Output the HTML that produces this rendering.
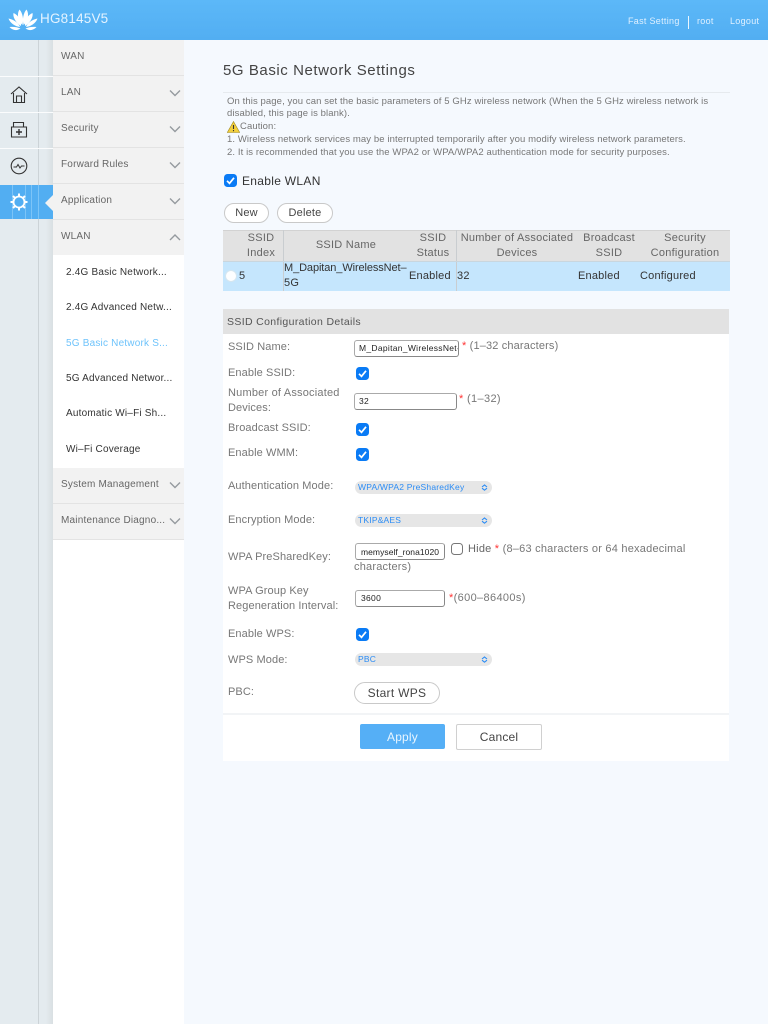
<!DOCTYPE html>
<html><head><meta charset="utf-8"><title>5G Basic Network Settings</title>
<style>
*{box-sizing:border-box}
html,body{margin:0;padding:0}
body{width:768px;height:1024px;overflow:hidden;background:#f5f9fe;position:relative;font-family:"Liberation Sans",sans-serif;color:#666}
.a{position:absolute}
.t{position:absolute;white-space:nowrap;line-height:14px;font-size:10px;letter-spacing:.45px}
.m{color:#666;left:61px;font-size:10px;letter-spacing:.2px}
.s{color:#333;left:66px;font-size:10px;letter-spacing:.2px}
.l{color:#777;left:228px;font-size:11px;letter-spacing:.1px}
.h{color:#666;font-size:11px;letter-spacing:.25px;text-align:center}
.d{color:#333;font-size:11px;letter-spacing:.2px}
.n{font-size:9.5px;letter-spacing:.1px;left:227px;color:#777}
.ck{position:absolute;width:13px;height:13px;border-radius:3.5px;background:#0a7bf5}
.in{position:absolute;background:#fff;border:1px solid #888;border-top-color:#aaa;border-left-color:#aaa;border-radius:3px;font-size:8.5px;letter-spacing:.3px;color:#222;line-height:15px;padding-left:4px;white-space:nowrap;overflow:hidden;height:17px}
.se{position:absolute;left:355px;width:137px;height:13px;border-radius:7px;background:#e6e6e6;color:#2b8cf5;font-size:8.5px;letter-spacing:.2px;line-height:13px;padding-left:3px;white-space:nowrap}
.se svg{position:absolute;left:126px;top:3px}
.b{position:absolute;background:#fff;border:1px solid #c9c9c9;border-radius:10px;text-align:center;color:#444}
.r{color:#f33;font-size:11px}
</style></head><body>
<div class="a" style="left:0;top:0;width:768px;height:40px;background:linear-gradient(#5cb8f8,#52aef2)"></div>
<svg class="a" style="left:8px;top:9px" width="30" height="23" viewBox="0 0 30 23" fill="#fff"><path d="M14.4 16 C10 12 8.5 5 11.5 .5 C14.5 4 16 10 14.4 16Z"/><path d="M15.6 16 C20 12 21.5 5 18.5 .5 C15.5 4 14 10 15.6 16Z"/><path d="M13 17 C8 14 4.5 8 5.5 4 C10 6 13.5 11 13 17Z"/><path d="M17 17 C22 14 25.5 8 24.5 4 C20 6 16.5 11 17 17Z"/><path d="M12 18 C7 17.5 2 14 .5 9.5 C5.5 10.5 10.5 13.5 12 18Z"/><path d="M18 18 C23 17.5 28 14 29.5 9.5 C24.5 10.5 19.5 13.5 18 18Z"/><path d="M12.5 19.5 C9 22 4.5 21.5 1.5 18 C5.5 17.5 9.5 18 12.5 19.5Z"/><path d="M17.5 19.5 C21 22 25.5 21.5 28.5 18 C24.5 17.5 20.5 18 17.5 19.5Z"/></svg>
<div class="t" style="left:40px;top:12px;color:#e4f3ff;font-size:13.5px;letter-spacing:.2px">HG8145V5</div>
<div class="t" style="left:628px;top:14px;color:#dff0ff;font-size:9px;letter-spacing:.3px">Fast Setting</div>
<div class="a" style="left:688px;top:16px;width:1px;height:13px;background:#eaf6ff"></div>
<div class="t" style="left:697px;top:14px;color:#dff0ff;font-size:9px;letter-spacing:.3px">root</div>
<div class="t" style="left:730px;top:14px;color:#dff0ff;font-size:9px;letter-spacing:.3px">Logout</div>

<!-- left strip -->
<div class="a" style="left:0;top:40px;width:53px;height:984px;background:#e4ebef"></div>
<div class="a" style="left:38px;top:40px;width:1px;height:984px;background:#ccd3d7"></div>
<div class="a" style="left:46px;top:40px;width:7px;height:984px;background:linear-gradient(90deg,#e4ebef,#d9dfe2)"></div>
<div class="a" style="left:0;top:75.5px;width:53px;height:1.5px;background:#fbfcfd"></div>
<div class="a" style="left:0;top:111.5px;width:53px;height:1.5px;background:#fbfcfd"></div>
<div class="a" style="left:0;top:147.5px;width:53px;height:1.5px;background:#fbfcfd"></div>
<div class="a" style="left:0;top:185px;width:53px;height:34px;background:#52aef2"></div>
<div class="a" style="left:12px;top:185px;width:1px;height:34px;background:#7cc4f7"></div>
<div class="a" style="left:25px;top:185px;width:1px;height:34px;background:#7cc4f7"></div>
<div class="a" style="left:31px;top:185px;width:1px;height:34px;background:#7cc4f7"></div>
<div class="a" style="left:38px;top:185px;width:1px;height:34px;background:#7cc4f7"></div>
<div class="a" style="left:45px;top:195px;width:0;height:0;border-top:8px solid transparent;border-bottom:8px solid transparent;border-right:8px solid #f2f2f2"></div>
<svg class="a" style="left:10px;top:85px" width="18" height="20" viewBox="0 0 18 20" fill="none" stroke="#333" stroke-width="1.1"><path d="M1 9 L9 2 L17 9"/><path d="M3.5 8 V17.5 H14.5 V8"/><path d="M6.5 17.5 V11 H11.5 V17.5"/></svg>
<svg class="a" style="left:10px;top:120px" width="18" height="19" viewBox="0 0 18 19" fill="none" stroke="#333" stroke-width="1.1"><path d="M1.5 7 H16.5 V17 H1.5Z"/><path d="M3.5 7 V2.5 H13.5 V7"/><path d="M9 9 V15 M6 12 H12" stroke-width="1.4"/></svg>
<svg class="a" style="left:10px;top:157px" width="18" height="18" viewBox="0 0 18 18" fill="none" stroke="#333" stroke-width="1.1"><circle cx="9" cy="9" r="7.8"/><path d="M3.5 10 H6.5 L8 7.5 L10 11 L11.5 9 H14.5" stroke-width="1"/></svg>
<svg class="a" style="left:9px;top:192px" width="20" height="20" viewBox="0 0 20 20" fill="none" stroke="#fff"><circle cx="10" cy="10" r="5.5" stroke-width="1.8"/><path d="M10 1.5 V4 M10 16 V18.5 M1.5 10 H4 M16 10 H18.5 M4 4 L5.8 5.8 M14.2 14.2 L16 16 M16 4 L14.2 5.8 M5.8 14.2 L4 16" stroke-width="2"/></svg>

<!-- menu -->
<div class="a" style="left:53px;top:40px;width:131px;height:984px;background:#fff"></div>
<div class="a" style="left:53px;top:40px;width:131px;height:215px;background:#f2f2f2"></div>
<div class="a" style="left:53px;top:468px;width:131px;height:72px;background:#f2f2f2"></div>
<div class="a" style="left:53px;top:75px;width:131px;height:1px;background:#e3e3e3"></div>
<div class="a" style="left:53px;top:111px;width:131px;height:1px;background:#e3e3e3"></div>
<div class="a" style="left:53px;top:147px;width:131px;height:1px;background:#e3e3e3"></div>
<div class="a" style="left:53px;top:183px;width:131px;height:1px;background:#e3e3e3"></div>
<div class="a" style="left:53px;top:219px;width:131px;height:1px;background:#e3e3e3"></div>
<div class="a" style="left:53px;top:503px;width:131px;height:1px;background:#e3e3e3"></div>
<div class="a" style="left:53px;top:539px;width:131px;height:1px;background:#e3e3e3"></div>
<div class="t m" style="top:50px">WAN</div>
<div class="t m" style="top:86px">LAN</div>
<div class="t m" style="top:122px">Security</div>
<div class="t m" style="top:158px">Forward Rules</div>
<div class="t m" style="top:194px">Application</div>
<div class="t m" style="top:230px">WLAN</div>
<div class="t s" style="top:266px">2.4G Basic Network...</div>
<div class="t s" style="top:301px">2.4G Advanced Netw...</div>
<div class="t s" style="top:337px;color:#6ec3fb">5G Basic Network S...</div>
<div class="t s" style="top:372px">5G Advanced Networ...</div>
<div class="t s" style="top:407px">Automatic Wi–Fi Sh...</div>
<div class="t s" style="top:443px">Wi–Fi Coverage</div>
<div class="t m" style="top:478px">System Management</div>
<div class="t m" style="top:514px">Maintenance Diagno...</div>
<svg class="a" style="left:0;top:0" width="184" height="540" fill="none" stroke="#959a9f" stroke-width="1.4"><path d="M170 90.5 L175 95.5 L180 90.5M170 126.5 L175 131.5 L180 126.5M170 162.5 L175 167.5 L180 162.5M170 198.5 L175 203.5 L180 198.5M170 240 L175 235 L180 240M170 482.5 L175 487.5 L180 482.5M170 518.5 L175 523.5 L180 518.5"/></svg>

<!-- title -->
<div class="t" style="left:223px;top:63px;font-size:15px;line-height:16px;color:#444;letter-spacing:.56px">5G Basic Network Settings</div>
<div class="a" style="left:223px;top:92px;width:507px;height:1px;background:#e6eaee"></div>
<div class="t n" style="top:95px">On this page, you can set the basic parameters of 5 GHz wireless network (When the 5 GHz wireless network is</div>
<div class="t n" style="top:107px">disabled, this page is blank).</div>
<svg class="a" style="left:227px;top:121px" width="13" height="12" viewBox="0 0 13 12"><path d="M6.5 .5 L12.7 11.5 H.3Z" fill="#f3cf3c" stroke="#a08a20" stroke-width=".6"/><path d="M6.5 4 V8 M6.5 9 V10.3" stroke="#333" stroke-width="1.1"/></svg>
<div class="t n" style="top:120px;left:240px">Caution:</div>
<div class="t n" style="top:133px">1. Wireless network services may be interrupted temporarily after you modify wireless network parameters.</div>
<div class="t n" style="top:146px">2. It is recommended that you use the WPA2 or WPA/WPA2 authentication mode for security purposes.</div>

<div class="ck" style="left:224px;top:174px"><svg width="13" height="13" viewBox="0 0 13 13" fill="none" stroke="#fff" stroke-width="1.7"><path d="M3 6.8 L5.5 9.3 L10 3.8"/></svg></div>
<div class="t" style="left:242px;top:174px;font-size:12px;color:#333;letter-spacing:.3px">Enable WLAN</div>

<div class="b" style="left:224px;top:203px;width:45px;height:20px;font-size:11px;line-height:18px;letter-spacing:.2px">New</div>
<div class="b" style="left:277px;top:203px;width:56px;height:20px;font-size:11px;line-height:18px;letter-spacing:.2px">Delete</div>

<!-- table -->
<div class="a" style="left:223px;top:230px;width:507px;height:32px;background:#e2e2e2;border-top:1px solid #d2d2d2"></div>
<div class="a" style="left:223px;top:262px;width:507px;height:29px;background:#c5e6fd"></div>
<div class="a" style="left:283px;top:230px;width:1px;height:61px;background:#c9cdd0"></div>
<div class="a" style="left:456px;top:230px;width:1px;height:61px;background:#c9cdd0"></div>
<div class="a" style="left:223px;top:261px;width:507px;height:1px;background:#c9d6de"></div>
<div class="t h" style="left:239px;width:44px;top:231px">SSID</div>
<div class="t h" style="left:239px;width:44px;top:246px">Index</div>
<div class="t h" style="left:300px;width:92px;top:238px">SSID Name</div>
<div class="t h" style="left:412px;width:42px;top:231px">SSID</div>
<div class="t h" style="left:412px;width:42px;top:246px">Status</div>
<div class="t h" style="left:457px;width:120px;top:231px">Number of Associated</div>
<div class="t h" style="left:457px;width:120px;top:246px">Devices</div>
<div class="t h" style="left:580px;width:58px;top:231px">Broadcast</div>
<div class="t h" style="left:580px;width:58px;top:246px">SSID</div>
<div class="t h" style="left:640px;width:90px;top:231px">Security</div>
<div class="t h" style="left:640px;width:90px;top:246px">Configuration</div>
<div class="a" style="left:225px;top:270px;width:12px;height:12px;border-radius:50%;background:#fdfeff;border:1px solid #d5e6f0"></div>
<div class="t d" style="left:239px;top:269px">5</div>
<div class="t d" style="left:284px;top:261px;letter-spacing:-.1px">M_Dapitan_WirelessNet–</div>
<div class="t d" style="left:284px;top:276px">5G</div>
<div class="t d" style="left:409px;top:269px">Enabled</div>
<div class="t d" style="left:457px;top:269px">32</div>
<div class="t d" style="left:578px;top:269px">Enabled</div>
<div class="t d" style="left:640px;top:269px">Configured</div>

<!-- details -->
<div class="a" style="left:223px;top:309px;width:506px;height:452px;background:#fff"></div>
<div class="a" style="left:223px;top:309px;width:506px;height:25px;background:#e2e2e2"></div>
<div class="t" style="left:227px;top:315px;color:#555;font-size:10.5px;letter-spacing:.35px">SSID Configuration Details</div>
<div class="a" style="left:223px;top:713px;width:506px;height:2px;background:#f2f4f6"></div>

<div class="t l" style="top:340px">SSID Name:</div>
<div class="in" style="left:354px;top:340px;width:105px">M_Dapitan_WirelessNet-5G</div>
<div class="t l" style="left:462px;top:339px;letter-spacing:.15px"><span class="r">*</span> (1–32 characters)</div>
<div class="t l" style="top:366px">Enable SSID:</div>
<div class="ck" style="left:356px;top:367px"><svg width="13" height="13" viewBox="0 0 13 13" fill="none" stroke="#fff" stroke-width="1.7"><path d="M3 6.8 L5.5 9.3 L10 3.8"/></svg></div>
<div class="t l" style="top:386px;letter-spacing:.2px">Number of Associated</div>
<div class="t l" style="top:401px">Devices:</div>
<div class="in" style="left:354px;top:393px;width:103px">32</div>
<div class="t l" style="left:459px;top:392px;letter-spacing:.35px"><span class="r">*</span> (1–32)</div>
<div class="t l" style="top:421px">Broadcast SSID:</div>
<div class="ck" style="left:356px;top:423px"><svg width="13" height="13" viewBox="0 0 13 13" fill="none" stroke="#fff" stroke-width="1.7"><path d="M3 6.8 L5.5 9.3 L10 3.8"/></svg></div>
<div class="t l" style="top:446px">Enable WMM:</div>
<div class="ck" style="left:356px;top:448px"><svg width="13" height="13" viewBox="0 0 13 13" fill="none" stroke="#fff" stroke-width="1.7"><path d="M3 6.8 L5.5 9.3 L10 3.8"/></svg></div>
<div class="t l" style="top:479px">Authentication Mode:</div>
<div class="se" style="top:481px">WPA/WPA2 PreSharedKey<svg width="7" height="7" viewBox="0 0 7 7" fill="none" stroke="#2b8cf5" stroke-width="1.1"><path d="M1 3 L3.5 1 L6 3M1 4.2 L3.5 6.2 L6 4.2"/></svg></div>
<div class="t l" style="top:513px">Encryption Mode:</div>
<div class="se" style="top:514px">TKIP&amp;AES<svg width="7" height="7" viewBox="0 0 7 7" fill="none" stroke="#2b8cf5" stroke-width="1.1"><path d="M1 3 L3.5 1 L6 3M1 4.2 L3.5 6.2 L6 4.2"/></svg></div>
<div class="t l" style="top:550px">WPA PreSharedKey:</div>
<div class="in" style="left:355px;top:543px;width:90px;padding-left:5px;letter-spacing:.06px;line-height:16px">memyself_rona1020</div>
<div class="a" style="left:451px;top:543px;width:12px;height:12px;border-radius:3.5px;border:1px solid #777;background:#fff"></div>
<div class="t l" style="left:468px;top:542px;letter-spacing:.22px"><span style="color:#666">Hide</span> <span class="r">*</span> (8–63 characters or 64 hexadecimal</div>
<div class="t l" style="left:354px;top:560px;letter-spacing:.2px">characters)</div>
<div class="t l" style="top:584px">WPA Group Key</div>
<div class="t l" style="top:599px">Regeneration Interval:</div>
<div class="in" style="left:355px;top:590px;width:90px;padding-left:5px">3600</div>
<div class="t l" style="left:449px;top:591px;letter-spacing:.35px"><span class="r">*</span>(600–86400s)</div>
<div class="t l" style="top:627px">Enable WPS:</div>
<div class="ck" style="left:356px;top:628px"><svg width="13" height="13" viewBox="0 0 13 13" fill="none" stroke="#fff" stroke-width="1.7"><path d="M3 6.8 L5.5 9.3 L10 3.8"/></svg></div>
<div class="t l" style="top:653px">WPS Mode:</div>
<div class="se" style="top:653px">PBC<svg width="7" height="7" viewBox="0 0 7 7" fill="none" stroke="#2b8cf5" stroke-width="1.1"><path d="M1 3 L3.5 1 L6 3M1 4.2 L3.5 6.2 L6 4.2"/></svg></div>
<div class="t l" style="top:685px">PBC:</div>
<div class="b" style="left:354px;top:682px;width:86px;height:22px;border-radius:11px;font-size:12px;line-height:20px;letter-spacing:.3px;color:#444">Start WPS</div>
<div class="a" style="left:360px;top:724px;width:85px;height:25px;background:#55aff6;border-radius:2px;color:#e8f5ff;text-align:center;font-size:12px;line-height:25px;letter-spacing:.2px;padding-top:1px">Apply</div>
<div class="a" style="left:456px;top:724px;width:86px;height:26px;background:#fff;border:1px solid #d0d0d0;border-radius:2px;color:#444;text-align:center;font-size:12px;line-height:24px;letter-spacing:.2px">Cancel</div>
</body></html>
